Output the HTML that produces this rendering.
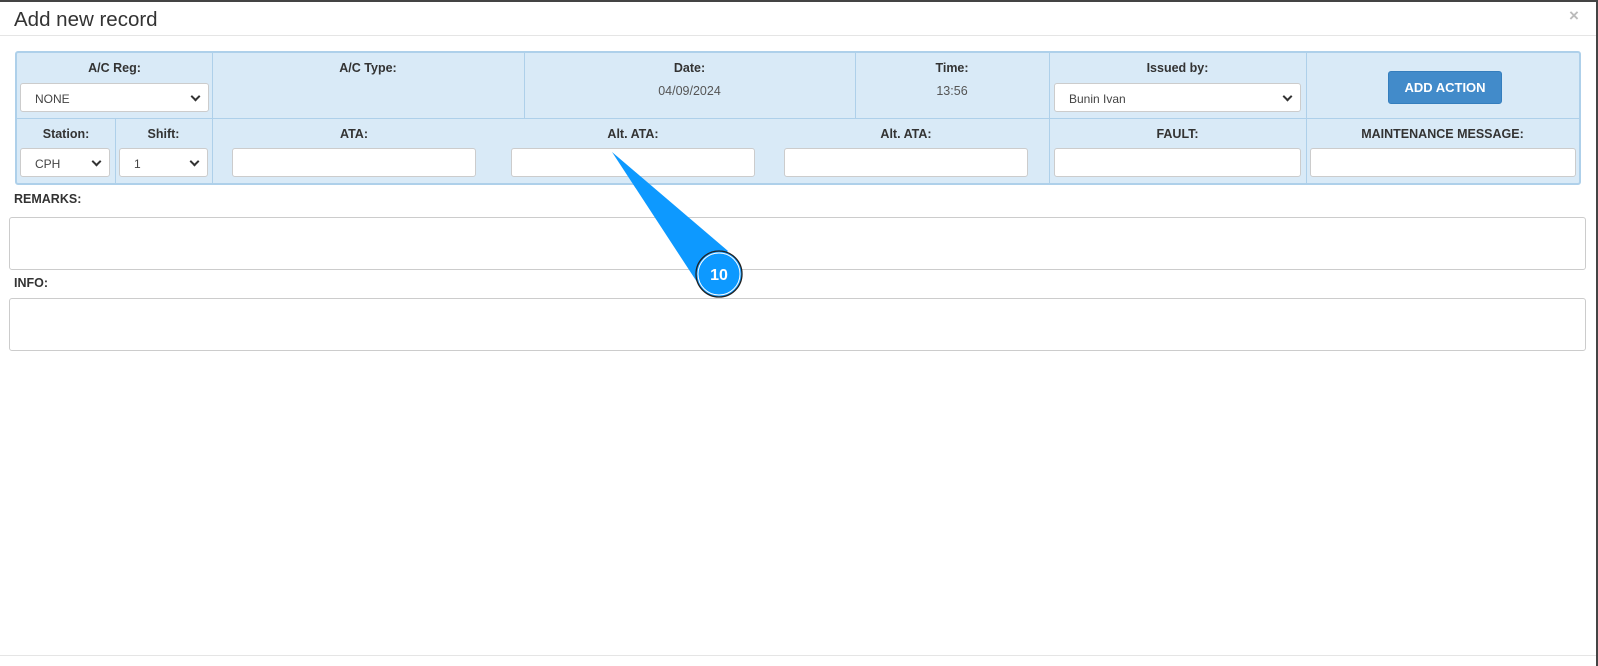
<!DOCTYPE html>
<html><head><meta charset="utf-8"><style>
*{box-sizing:border-box;margin:0;padding:0}
body{width:1598px;height:666px;background:#fff;font-family:"Liberation Sans",Arial,sans-serif;color:#333;position:relative;overflow:hidden}
.frame{position:absolute;left:0;top:0;width:1598px;height:666px;border-top:2px solid #444;border-right:2px solid #444}
.title{position:absolute;left:14px;top:8px;font-size:20.5px;color:#333}
.close{position:absolute;left:1569px;top:6px;font-size:17px;color:#bbb;font-weight:bold}
.hline{position:absolute;left:0;width:1596px;height:1px;background:#e5e5e5}
.tbl{position:absolute;left:15px;top:51px;width:1566px;height:134px;background:#d9eaf7;border:2px solid #aed0ea;border-radius:3px}
.v{position:absolute;width:1px;background:#aed0ea}
.lbl{position:absolute;font-size:12.5px;font-weight:bold;text-align:center;color:#333}
.val{position:absolute;font-size:12.5px;text-align:center;color:#555}
.inp{position:absolute;background:#fff;border:1px solid #ccc;border-radius:3px;height:29px}
.sel{font-size:12px;color:#444;padding:8px 0 0 14px}
.sel::after{content:"";position:absolute;right:9px;top:9px;width:5px;height:5px;border-right:2px solid #333;border-bottom:2px solid #333;transform:rotate(45deg)}
.btn{position:absolute;left:1371px;top:18px;width:114px;height:33px;background:#428bca;border:1px solid #357ebd;border-radius:3px;color:#fff;font-weight:bold;font-size:13px;text-align:center;line-height:31px}
.ta{position:absolute;left:9px;width:1577px;background:#fff;border:1px solid #ccc;border-radius:3px}
.sl{position:absolute;left:14px;font-size:12.5px;font-weight:bold}
</style></head><body>
<div class="frame"></div>
<div class="title">Add new record</div>
<div class="close">×</div>
<div class="hline" style="top:35px"></div>
<div class="hline" style="top:655px"></div>
<div class="tbl">
 <div class="v" style="left:195px;top:0;height:130px"></div>
 <div class="v" style="left:507px;top:0;height:65px"></div>
 <div class="v" style="left:838px;top:0;height:65px"></div>
 <div class="v" style="left:1032px;top:0;height:130px"></div>
 <div class="v" style="left:1289px;top:0;height:130px"></div>
 <div class="v" style="left:98px;top:65px;height:65px"></div>
 <div style="position:absolute;left:0;top:65px;width:1562px;height:1px;background:#aed0ea"></div>
 <div class="lbl" style="left:0;width:195px;top:8px">A/C Reg:</div>
 <div class="inp sel" style="left:3px;top:30px;width:189px">NONE</div>
 <div class="lbl" style="left:195px;width:312px;top:8px">A/C Type:</div>
 <div class="lbl" style="left:507px;width:331px;top:8px">Date:</div>
 <div class="val" style="left:507px;width:331px;top:31px">04/09/2024</div>
 <div class="lbl" style="left:838px;width:194px;top:8px">Time:</div>
 <div class="val" style="left:838px;width:194px;top:31px">13:56</div>
 <div class="lbl" style="left:1032px;width:257px;top:8px">Issued by:</div>
 <div class="inp sel" style="left:1037px;top:30px;width:247px">Bunin Ivan</div>
 <div class="btn">ADD ACTION</div>
 <div class="lbl" style="left:0;width:98px;top:74px">Station:</div>
 <div class="inp sel" style="left:3px;top:95px;width:90px">CPH</div>
 <div class="lbl" style="left:98px;width:97px;top:74px">Shift:</div>
 <div class="inp sel" style="left:102px;top:95px;width:89px">1</div>
 <div class="lbl" style="left:215px;width:244px;top:74px">ATA:</div>
 <div class="inp" style="left:215px;top:95px;width:244px"></div>
 <div class="lbl" style="left:494px;width:244px;top:74px">Alt. ATA:</div>
 <div class="inp" style="left:494px;top:95px;width:244px"></div>
 <div class="lbl" style="left:767px;width:244px;top:74px">Alt. ATA:</div>
 <div class="inp" style="left:767px;top:95px;width:244px"></div>
 <div class="lbl" style="left:1032px;width:257px;top:74px">FAULT:</div>
 <div class="inp" style="left:1037px;top:95px;width:247px"></div>
 <div class="lbl" style="left:1289px;width:273px;top:74px">MAINTENANCE MESSAGE:</div>
 <div class="inp" style="left:1293px;top:95px;width:266px"></div>
</div>
<div class="sl" style="top:192px">REMARKS:</div>
<div class="ta" style="top:217px;height:53px"></div>
<div class="sl" style="top:276px">INFO:</div>
<div class="ta" style="top:298px;height:53px"></div>
<svg style="position:absolute;left:0;top:0" width="1598" height="666">
 <polygon points="612,152 728,251 697,282" fill="#0d99ff"/>
 <circle cx="719" cy="274" r="23" fill="#0d99ff" stroke="#222" stroke-width="1.3"/>
 <circle cx="719" cy="274" r="21" fill="none" stroke="#fff" stroke-width="1"/>
 <text x="719" y="280" font-family="Liberation Sans" font-weight="bold" font-size="16" fill="#fff" text-anchor="middle">10</text>
</svg>
</body></html>
